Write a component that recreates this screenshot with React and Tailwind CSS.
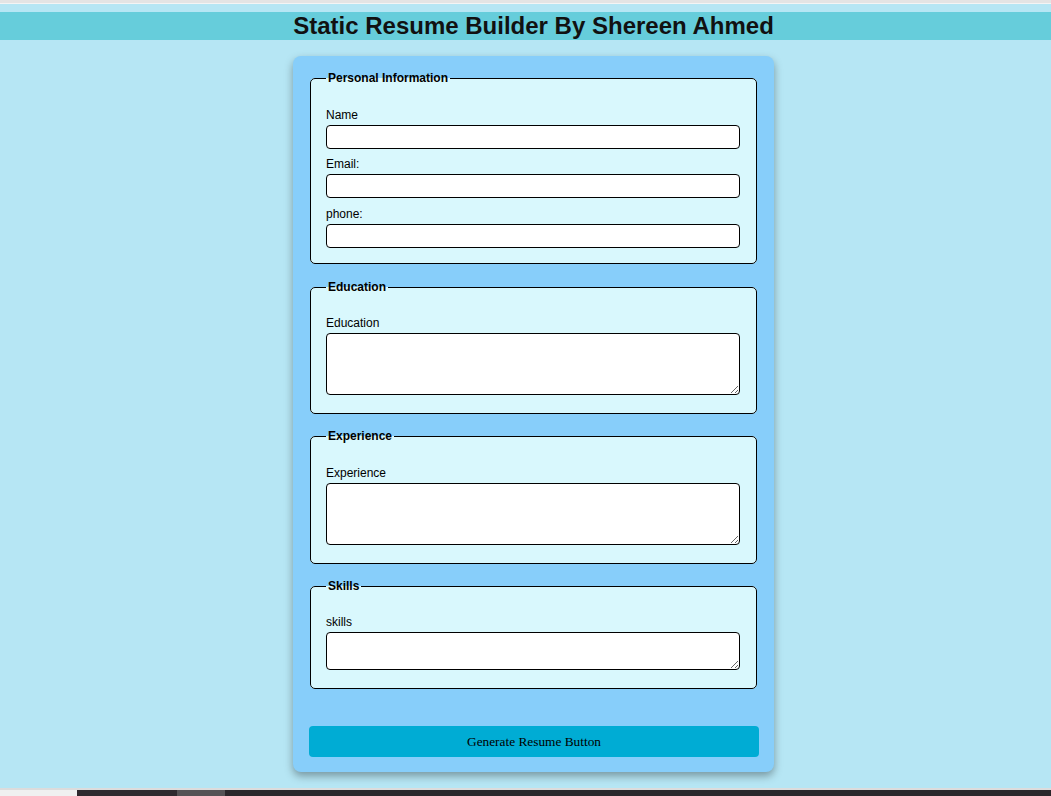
import React from "react";

function Field({ label, children, className = "" }) {
  return (
    <div className={className}>
      <label className="block text-[12px] leading-[14px] mb-[3px] text-black">{label}</label>
      {children}
    </div>
  );
}

function Section({ title, children, pt = "pt-[23px]", pb = "pb-[15px]", mb = "mb-[15px]" }) {
  return (
    <fieldset className={`mx-[1px] border border-black rounded-[5px] bg-[#d9f8fd] pl-[15px] pr-[16px] ${pt} ${pb} ${mb}`}>
      <legend className="px-[2px] text-[12px] leading-[14px] font-bold text-black">{title}</legend>
      {children}
    </fieldset>
  );
}

const inputCls = "block w-full h-[24px] border border-black rounded-[4px] bg-white outline-none";
const areaCls = "block w-full border border-black rounded-[4px] bg-white outline-none";

export default function App() {
  return (
    <div className="w-[1051px] h-[796px] overflow-hidden font-['Liberation_Sans',Arial,sans-serif]">
      <div className="h-[3px] bg-[#e4e4e4]" />
      <div className="h-[1px] bg-[#f4f4f4]" />
      <div className="h-[784px] overflow-hidden bg-[#b6e6f4] pt-[8px]">
        <header className="h-[28px] bg-[#66cddb] flex items-center justify-center pl-[16px]">
          <h1 className="text-[24px] leading-[28px] font-bold text-[#111]">Static Resume Builder By Shereen Ahmed</h1>
        </header>
        <div className="flex justify-center pl-[16px] mt-[16px]">
          <div className="w-[481px] bg-[#87cefa] rounded-[8px] pl-[16px] pr-[15px] pt-[15px] pb-[15px] shadow-[0_4px_8px_rgba(0,0,0,0.35)]">
            <form onSubmit={(e) => e.preventDefault()}>
              <div className="pr-[1px]">
                <Section title="Personal Information" mb="mb-[16px]">
                  <Field label="Name">
                    <input type="text" className={inputCls} />
                  </Field>
                  <Field label="Email:" className="mt-[8px]">
                    <input type="email" className={inputCls} />
                  </Field>
                  <Field label="phone:" className="mt-[9px]">
                    <input type="tel" className={inputCls} />
                  </Field>
                </Section>
                <Section title="Education" pt="pt-[22px]" pb="pb-[18px]">
                  <Field label="Education">
                    <textarea className={`${areaCls} h-[62px]`} />
                  </Field>
                </Section>
                <Section title="Experience" pt="pt-[23px]" pb="pb-[18px]">
                  <Field label="Experience">
                    <textarea className={`${areaCls} h-[62px]`} />
                  </Field>
                </Section>
                <Section title="Skills" pt="pt-[22px]" pb="pb-[18px]" mb="mb-[37px]">
                  <Field label="skills">
                    <textarea className={`${areaCls} h-[38px]`} />
                  </Field>
                </Section>
              </div>
              <button
                type="submit"
                className="block w-full h-[31px] bg-[#00acd4] rounded-[4px] text-[13.33px] text-black font-['Liberation_Serif','Times_New_Roman',serif]"
              >
                Generate Resume Button
              </button>
            </form>
          </div>
        </div>
      </div>
      <div className="h-[2px] bg-[#dcdcdc]" />
      <div className="h-[6px] flex">
        <div className="w-[77px] bg-[#f0f0f0]" />
        <div className="w-[100px] bg-[#2f2a2f]" />
        <div className="w-[48px] bg-[#555255]" />
        <div className="flex-1 bg-[#2a262a]" />
      </div>
    </div>
  );
}
